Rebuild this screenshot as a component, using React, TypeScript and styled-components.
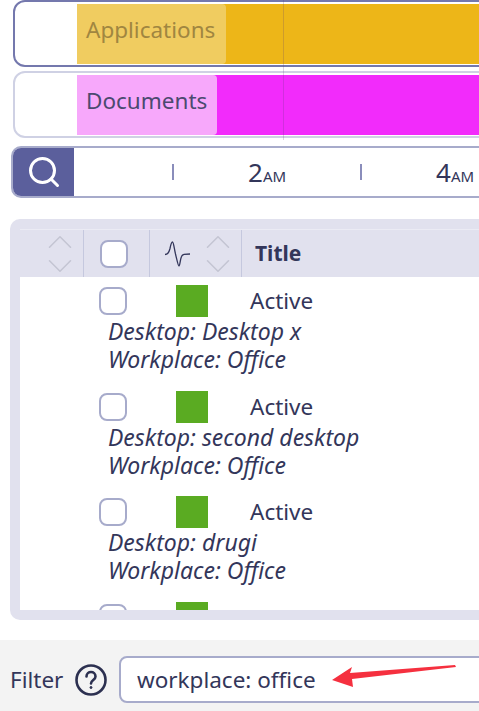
import { ChevronDown, ChevronUp, Search } from "lucide-react";
import styled, { createGlobalStyle } from "styled-components";

const GlobalStyle = createGlobalStyle`
  html, body {
    margin: 0;
    padding: 0;
    background: #fff;
  }
`;

const Page = styled.div`
  width: 479px;
  height: 711px;
  overflow: hidden;
  display: flex;
  flex-direction: column;
  font-family: "Noto Sans", "Open Sans", sans-serif;
  font-size: 22.5px;
  color: #33365a;
  background: #fff;
`;

const Tracks = styled.div`
  position: relative;
  display: flex;
  flex-direction: column;
  gap: 4px;
  padding-left: 13px;
  height: 147px;
  box-sizing: border-box;
`;

const Track = styled.div<{ $selected?: boolean }>`
  width: 540px;
  height: 67px;
  box-sizing: border-box;
  flex-shrink: 0;
  padding: 2px 0 2px 62px;
  border: 2px solid ${({ $selected }) => ($selected ? "#7478ad" : "#cfd1e4")};
  border-radius: 12px;
  background: #fff;
`;

const TrackBar = styled.div<{ $color: string }>`
  display: flex;
  height: 60px;
  background: ${({ $color }) => $color};
`;

const TrackLabel = styled.div<{ $color: string; $width: number; $text: string }>`
  width: ${({ $width }) => $width}px;
  height: 100%;
  display: flex;
  align-items: center;
  padding: 0 0 10px 9px;
  box-sizing: border-box;
  border-radius: 0 4px 4px 0;
  color: ${({ $text }) => $text};
  background: ${({ $color }) => $color};
`;

const NowLine = styled.div`
  position: absolute;
  left: 283px;
  top: 0;
  width: 1px;
  height: 140px;
  background: rgba(90, 60, 120, 0.22);
`;

const TimeBar = styled.div`
  display: flex;
  width: 540px;
  height: 52px;
  margin-left: 11px;
  box-sizing: border-box;
  flex-shrink: 0;
  border: 2px solid #a7abcb;
  border-radius: 10px;
  overflow: hidden;
  background: #fff;
`;

const SearchButton = styled.div`
  width: 61px;
  flex-shrink: 0;
  display: flex;
  align-items: center;
  justify-content: center;
  background: #5b5f9c;
  color: #fff;
`;

const Scale = styled.div`
  display: flex;
  align-items: center;
  padding-left: 98px;
`;

const Tick = styled.span`
  width: 2px;
  height: 16px;
  background: #8a8dbb;
  flex-shrink: 0;
`;

const HourLabel = styled.span`
  margin: 0 74px;
  width: 38px;
  font-size: 26px;
  line-height: 1;
  white-space: nowrap;
`;

const Meridiem = styled.span`
  font-size: 15px;
`;

const Panel = styled.div`
  margin: 21px 0 0 10px;
  width: 540px;
  height: 401px;
  flex-shrink: 0;
  box-sizing: border-box;
  padding: 10px 0 10px 10px;
  border-radius: 10px;
  background: #e1e1ee;
  display: flex;
  flex-direction: column;
`;

const HeaderRow = styled.div`
  height: 48px;
  flex-shrink: 0;
  display: flex;
  border-top: 1px solid #ebebf4;
  box-sizing: border-box;
`;

const HeaderCell = styled.div<{ $width: number }>`
  width: ${({ $width }) => $width}px;
  flex-shrink: 0;
  box-sizing: border-box;
  display: flex;
  align-items: center;
  justify-content: flex-end;
  border-right: 1px solid #c5c8de;
`;

const SortIcon = styled.div`
  width: 24px;
  margin-right: 11px;
  display: flex;
  flex-direction: column;
  align-items: center;
  color: #c4c5d3;

  svg {
    display: block;
    flex-shrink: 0;
    margin: -9px -9px;
  }
`;

const PulseIcon = styled.svg`
  margin-right: 14px;
  flex-shrink: 0;
`;

const CheckBox = styled.span<{ $inset?: number }>`
  display: block;
  width: 28px;
  height: 28px;
  box-sizing: border-box;
  margin-right: ${({ $inset }) => $inset ?? 0}px;
  border: 2px solid #a7abcb;
  border-radius: 8px;
  background: #fff;
`;

const TitleHead = styled.div`
  padding-left: 13px;
  font-size: 21px;
  font-weight: 700;
  line-height: 46px;
`;

const RowList = styled.div`
  flex: 1;
  overflow: hidden;
  background: #fff;
`;

const Row = styled.div`
  height: 105.5px;
  box-sizing: border-box;
  padding-top: 8px;
`;

const RowTop = styled.div`
  display: grid;
  grid-template-columns: 77px 74px auto;
  align-items: center;
  height: 32px;
  padding-left: 79px;
`;

const ActiveLabel = styled.span`
  line-height: 32px;
`;

const Swatch = styled.span`
  display: block;
  width: 32px;
  height: 32px;
  background: #5aab22;
`;

const RowDetails = styled.div`
  margin-left: 88px;
  font-size: 23px;
  font-style: italic;
  line-height: 28px;
`;

const FilterBar = styled.div`
  position: relative;
  margin-top: 20px;
  height: 71px;
  flex-shrink: 0;
  display: flex;
  align-items: flex-start;
  padding: 16px 0 0 10px;
  box-sizing: border-box;
  background: #f3f3f3;
`;

const FilterLabel = styled.span`
  width: 53px;
  flex-shrink: 0;
  line-height: 48px;
`;

const HelpIcon = styled.svg`
  margin: 8px 12px 0 12px;
  flex-shrink: 0;
`;

const FilterInput = styled.div`
  width: 400px;
  height: 47px;
  flex-shrink: 0;
  box-sizing: border-box;
  padding-left: 16px;
  border: 2px solid #a7abcb;
  border-radius: 8px;
  background: #fff;
  line-height: 43px;
`;

const Arrow = styled.svg`
  position: absolute;
  left: 0;
  top: 0;
  pointer-events: none;
`;

const rows = ["Desktop x", "second desktop", "drugi", ""];

function Sort() {
    return (
        <SortIcon>
            <ChevronUp size={42} strokeWidth={0.9} />
            <ChevronDown size={42} strokeWidth={0.9} />
        </SortIcon>
    );
}

export default function App() {
    return (
        <Page>
            <GlobalStyle />
            <Tracks>
                <Track $selected>
                    <TrackBar $color="#edb618">
                        <TrackLabel $color="#f0cc60" $width={149} $text="#a08640">
                            Applications
                        </TrackLabel>
                    </TrackBar>
                </Track>
                <Track>
                    <TrackBar $color="#f22bfb">
                        <TrackLabel $color="#f7a8fb" $width={140} $text="#4b4a70">
                            Documents
                        </TrackLabel>
                    </TrackBar>
                </Track>
                <NowLine />
            </Tracks>
            <TimeBar>
                <SearchButton>
                    <Search size={36} strokeWidth={2} />
                </SearchButton>
                <Scale>
                    <Tick />
                    <HourLabel>
                        2<Meridiem>AM</Meridiem>
                    </HourLabel>
                    <Tick />
                    <HourLabel>
                        4<Meridiem>AM</Meridiem>
                    </HourLabel>
                </Scale>
            </TimeBar>
            <Panel>
                <HeaderRow>
                    <HeaderCell $width={64}>
                        <Sort />
                    </HeaderCell>
                    <HeaderCell $width={66}>
                        <CheckBox $inset={21} />
                    </HeaderCell>
                    <HeaderCell $width={92}>
                        <PulseIcon width="28" height="30" viewBox="0 0 28 30" fill="none" stroke="#33365a" strokeWidth="1.3">
                            <path d="M1 15.500c3 0 4-2 5-6 .8-4 1.500-6.500 2.500-6.500s1.500 5 3 12c1.500 6 2.500 12 3.500 12s1-6 2.500-9.500c1-2.500 3-2.500 8.500-2.500" />
                        </PulseIcon>
                        <Sort />
                    </HeaderCell>
                    <TitleHead>Title</TitleHead>
                </HeaderRow>
                <RowList>
                    {rows.map((desktop, index) => (
                        <Row key={index}>
                            <RowTop>
                                <CheckBox />
                                <Swatch />
                                <ActiveLabel>Active</ActiveLabel>
                            </RowTop>
                            {desktop && (
                                <RowDetails>
                                    Desktop: {desktop}
                                    <br />
                                    Workplace: Office
                                </RowDetails>
                            )}
                        </Row>
                    ))}
                </RowList>
            </Panel>
            <FilterBar>
                <FilterLabel>Filter</FilterLabel>
                <HelpIcon width="32" height="32" viewBox="0 0 32 32" fill="none" stroke="#2c3050" strokeWidth="2.6">
                    <circle cx="16" cy="16" r="14.500" />
                    <path d="M11.500 12.500c0-6 9-6 9 0 0 3.500-4.500 3.500-4.500 7" strokeLinecap="round" />
                    <circle cx="16" cy="23.500" r="1" fill="#2c3050" strokeWidth="1" />
                </HelpIcon>
                <FilterInput>workplace: office</FilterInput>
                <Arrow width="479" height="71" viewBox="0 640 479 71">
                    <path d="M332 680L352 667L350 673L455 665L456 667L352 679L353 687Z" fill="#f5303f" />
                </Arrow>
            </FilterBar>
        </Page>
    );
}
